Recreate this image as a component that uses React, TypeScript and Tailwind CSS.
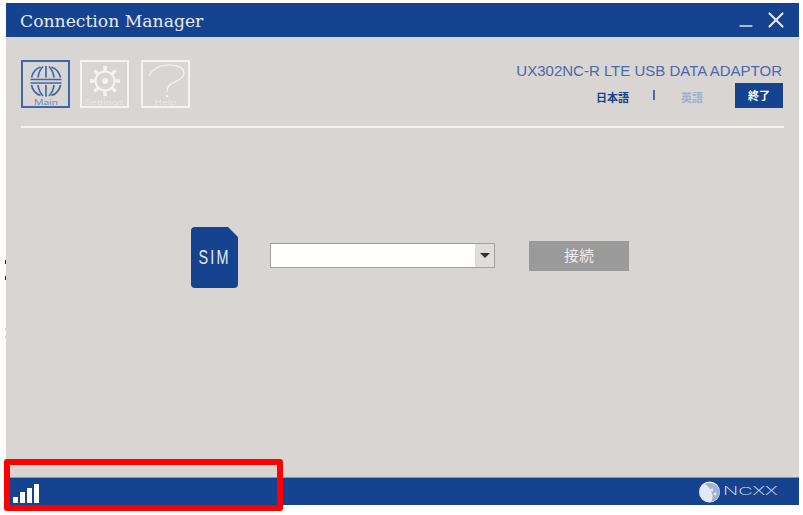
import { Minus, X } from 'lucide-react'

const SANS = 'font-["Liberation_Sans",sans-serif]'
const INTER = 'font-["Inter",sans-serif]'
const CJK = 'font-["Noto_Sans_CJK_JP",sans-serif]'

function GlobeIcon() {
  return (
    <svg width="32" height="32" viewBox="0 0 32 32" fill="none" stroke="#3f68ab" strokeWidth="1.7">
      <path d="M1.5 12.5 C2.5 8 6 3.5 10.5 2 M30.5 12.5 C29.5 8 26 3.5 21.5 2" />
      <path d="M8 12.5 C8.5 8 10.5 4 13 1.5 M24 12.5 C23.5 8 21.5 4 19 1.5" />
      <path d="M16 12.5 V1" />
      <path d="M0.5 14.5 H31.5 M0.5 18 H31.5" strokeWidth="1.5" />
      <path d="M1.5 20 C2.5 25 6 29 10.5 30.5 M30.5 20 C29.5 25 26 29 21.5 30.5" />
      <path d="M8 20 C8.5 24.5 10.5 28.5 13 31 M24 20 C23.5 24.5 21.5 28.5 19 31" />
      <path d="M16 20 V31.5" />
    </svg>
  )
}

function GearIcon() {
  return (
    <svg width="32" height="32" viewBox="0 0 32 32" fill="none" stroke="#f4f3f1">
      <circle cx="16" cy="16" r="9.5" strokeWidth="2" />
      <circle cx="16" cy="16" r="3" fill="#f4f3f1" stroke="none" />
      <path
        d="M16 1 V6 M16 26 V31 M1 16 H6 M26 16 H31 M5.4 5.4 L9 9 M23 23 L26.6 26.6 M26.6 5.4 L23 9 M9 23 L5.4 26.6"
        strokeWidth="3.5"
      />
    </svg>
  )
}

function HelpIcon() {
  return (
    <svg width="38" height="34" viewBox="0 0 38 34" fill="none" stroke="#f4f3f1" strokeWidth="1.2">
      <path d="M2 12 C6 4 14 1 22 1 C31 1 37 4 37 9 C37 14 30 17 24 20 C21 22 20 24 20 28" />
      <circle cx="20" cy="32" r="1.3" fill="#f4f3f1" stroke="none" />
    </svg>
  )
}

function ToolButton({ label, active, icon }: { label: string; active?: boolean; icon: React.ReactNode }) {
  return (
    <div
      className={`flex h-[48px] w-[49px] flex-col items-center border-2 pt-[3px] ${
        active ? 'border-[#3f68ab]' : 'border-[#f4f3f1]'
      }`}
    >
      <div className="flex h-[32px] items-center justify-center">{icon}</div>
      <span
        className={`mt-[2px] scale-x-[1.5] text-[7px] font-light leading-[8px] ${INTER} ${
          active ? 'text-[#5a7db5]' : 'text-[#ecebe8]'
        }`}
      >
        {label}
      </span>
    </div>
  )
}

function SignalBars() {
  const heights = [6, 11, 15, 19]
  return (
    <div className="flex items-end gap-[2.5px]">
      {heights.map((h, i) => (
        <div key={i} className="w-[4.5px] bg-white" style={{ height: h }} />
      ))}
    </div>
  )
}

function NcxxLogo() {
  return (
    <div className="flex items-center">
      <svg width="23" height="22" viewBox="0 0 23 22">
        <circle cx="11.5" cy="11" r="10.5" fill="#e4eaf4" />
        <path d="M7 3 C14 0 22 5 22 12 C21 17 17 20 13 21 C17 15 13 7 7 3 Z" fill="#9db2d4" />
        <circle cx="14" cy="9" r="1.4" fill="#e4eaf4" />
        <circle cx="17" cy="13" r="1.4" fill="#e4eaf4" />
      </svg>
      <span className={`ml-[2px] w-[55px] origin-left scale-x-[1.8] text-[11px] font-extralight leading-none text-[#e4eaf4] ${INTER}`}>
        NCXX
      </span>
    </div>
  )
}

export default function App() {
  return (
    <div className="relative h-[515px] w-[803px] overflow-hidden bg-white">
      <div className="ml-[6px] w-[793px] pt-[3px]">
        {/* title bar */}
        <div className="flex h-[34px] items-center justify-between bg-[#15438f] pl-[14px] pr-[10px]">
          <span className='pt-[3px] font-["DejaVu_Serif",serif] text-[17.2px] text-[#e6ebf3]'>Connection Manager</span>
          <div className="flex items-center gap-[7px] text-[#dfe5ef]">
            <Minus size={20} strokeWidth={2} className="mt-[12px]" />
            <X size={26} strokeWidth={2} />
          </div>
        </div>

        {/* body */}
        <div className="flex h-[440px] flex-col bg-[#d8d5d2] px-[15px]">
          <div className="flex h-[91px] justify-between border-b-2 border-[#f4f3f1] pt-[23px]">
            <div className="flex">
              <ToolButton label="Main" active icon={<GlobeIcon />} />
              <div className="ml-[10px]">
                <ToolButton label="Settings" icon={<GearIcon />} />
              </div>
              <div className="ml-[12px]">
                <ToolButton label="Help" icon={<HelpIcon />} />
              </div>
            </div>
            <div className="flex flex-col items-end">
              <div className={`mr-[2px] mt-[1px] text-[15px] leading-[20px] text-[#4a68ac] ${SANS}`}>
                UX302NC-R LTE USB DATA ADAPTOR
              </div>
              <div className="mr-[1px] mt-[2px] flex items-center">
                <span className={`mt-[4px] text-[11px] font-bold text-[#15438f] ${CJK}`}>日本語</span>
                <span className="mb-[1px] ml-[24px] mr-[26px] h-[10px] w-[2px] bg-[#4a68ac]" />
                <span className={`mt-[4px] text-[11px] font-bold text-[#9db0d2] ${CJK}`}>英語</span>
                <button className={`ml-[32px] flex h-[25px] w-[48px] items-center justify-center bg-[#15438f] text-[11px] font-bold text-white ${CJK}`}>
                  終了
                </button>
              </div>
            </div>
          </div>

          <div className="flex flex-1 items-start pl-[170px] pt-[99px]">
            <div className="h-[61px] w-[47px] rounded-[4px] bg-[#15438f] [clip-path:polygon(0_0,37px_0,100%_10px,100%_100%,0_100%)]">
              <div className={`flex h-full items-center justify-center pb-[1px] text-[20px] tracking-[3px] text-[#e6ebf3] ${SANS} scale-x-[0.72]`}>
                SIM
              </div>
            </div>
            <div className="ml-[32px] mt-[16px] flex h-[25px] w-[225px] items-stretch border border-[#a3a09d] bg-white">
              <div className="flex-1" />
              <div className="flex w-[19px] items-center justify-center bg-[#dedede]">
                <div className="h-0 w-0 border-x-[5px] border-t-[5px] border-x-transparent border-t-[#333]" />
              </div>
            </div>
            <button className={`ml-[34px] mt-[14px] h-[30px] w-[100px] bg-[#9a9a9a] pb-[1px] text-[15px] text-[#eeeeee] ${CJK}`}>
              接続
            </button>
          </div>
        </div>

        {/* status bar */}
        <div className="flex h-[28px] items-center justify-between border-t border-[#8b93a8] bg-[#15438f] pl-[7px] pr-[21px]">
          <div className="mt-[3px]">
            <SignalBars />
          </div>
          <NcxxLogo />
        </div>
      </div>

      {/* stray marks at the window edge */}
      <div className="absolute left-[5px] top-[260px] h-[4px] w-[1px] bg-[#222222]" />
      <div className="absolute left-[5px] top-[276px] h-[4px] w-[1px] bg-[#222233]" />
      <div className="absolute left-[5px] top-[328px] h-[2px] w-[1px] bg-[#bcdcec]" />
      <div className="absolute left-[5px] top-[336px] h-[2px] w-[1px] bg-[#bcdcec]" />

      {/* red annotation over the status bar */}
      <div className="absolute left-[4px] top-[459px] h-[52px] w-[279px] rounded-[3px] border-[6px] border-[#ff0000]" />
    </div>
  )
}
